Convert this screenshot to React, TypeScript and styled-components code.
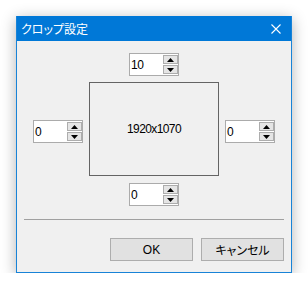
import React from "react";
import styled, { createGlobalStyle } from "styled-components";

const Global = createGlobalStyle`
  html, body { margin: 0; padding: 0; background: #ffffff; }
  body { font-family: "Liberation Sans", "Noto Sans CJK JP", sans-serif; }
`;

const Page = styled.div`
  padding: 16px 0 0 16px;
`;

const Window = styled.div`
  width: 276px;
  height: 257px;
  box-sizing: border-box;
  border: 1px solid #1883d7;
  background: #f0f0f0;
  box-shadow: 0 3px 14px rgba(0, 0, 0, 0.3);
  display: flex;
  flex-direction: column;
`;

const TitleBar = styled.div`
  height: 25px;
  margin-top: -1px;
  background: #0078d7;
  display: flex;
  align-items: center;
  justify-content: space-between;
  padding: 0 0 0 4px;
  color: #ffffff;
`;

const Title = styled.span`
  font-family: "Noto Sans CJK JP", sans-serif;
  font-size: 12px;
  font-feature-settings: "palt";
  line-height: 1;
`;

const Close = styled.div`
  width: 30px;
  height: 25px;
  display: flex;
  align-items: center;
  justify-content: center;
`;

const Body = styled.div`
  flex: 1;
  display: flex;
  flex-direction: column;
  align-items: center;
  padding-top: 12px;
`;

const Middle = styled.div`
  display: flex;
  align-items: flex-start;
  gap: 6px;
  margin: 6px 0 7px;
`;

const SideSpin = styled.div`
  margin-top: 38px;
`;

const Preview = styled.div`
  width: 130px;
  height: 94px;
  box-sizing: border-box;
  border: 1px solid #646464;
  display: flex;
  align-items: center;
  justify-content: center;
  font-size: 12px;
  letter-spacing: -0.6px;
  color: #000;
`;

const Separator = styled.div`
  align-self: stretch;
  height: 1px;
  background: #a0a0a0;
  margin: 13px 7px 0 7px;
`;

const Buttons = styled.div`
  align-self: stretch;
  display: flex;
  justify-content: flex-end;
  gap: 8px;
  padding: 18px 7px 0 0;
`;

const Button = styled.div`
  width: 83px;
  height: 23px;
  box-sizing: border-box;
  border: 1px solid #adadad;
  background: #e1e1e1;
  display: flex;
  align-items: center;
  justify-content: center;
  font-size: 12px;
  font-family: "Liberation Sans", "Noto Sans CJK JP", sans-serif;
  font-feature-settings: "palt";
  color: #000;
`;

const SpinBox = styled.div`
  width: 50px;
  height: 23px;
  box-sizing: border-box;
  border: 1px solid #ababab;
  background: #ffffff;
  display: flex;
  align-items: center;
`;

const SpinValue = styled.span`
  flex: 1;
  padding-left: 1px;
  font-size: 12px;
  letter-spacing: -0.5px;
  color: #000;
`;

const SpinButtons = styled.div`
  width: 15px;
  display: flex;
  flex-direction: column;
  gap: 1px;
`;

const SpinButton = styled.div`
  height: 9px;
  box-sizing: border-box;
  border: 1px solid #adadad;
  background: #e5e5e5;
  display: flex;
  align-items: center;
  justify-content: center;
`;

const Arrow = ({ up }: { up?: boolean }) => (
  <svg width="7" height="4" viewBox="0 0 7 4">
    <path d={up ? "M0 4 L3.5 0 L7 4 Z" : "M0 0 L3.5 4 L7 0 Z"} fill="#000" />
  </svg>
);

const Spinner = ({ value }: { value: string }) => (
  <SpinBox>
    <SpinValue>{value}</SpinValue>
    <SpinButtons>
      <SpinButton>
        <Arrow up />
      </SpinButton>
      <SpinButton>
        <Arrow />
      </SpinButton>
    </SpinButtons>
  </SpinBox>
);

export default function App() {
  return (
    <>
      <Global />
      <Page>
        <Window>
          <TitleBar>
            <Title>クロップ設定</Title>
            <Close>
              <svg width="10" height="10" viewBox="0 0 10 10">
                <path d="M0.5 0.5 L9.5 9.5 M9.5 0.5 L0.5 9.5" stroke="#fff" strokeWidth="1.1" />
              </svg>
            </Close>
          </TitleBar>
          <Body>
            <Spinner value="10" />
            <Middle>
              <SideSpin>
                <Spinner value="0" />
              </SideSpin>
              <Preview>1920x1070</Preview>
              <SideSpin>
                <Spinner value="0" />
              </SideSpin>
            </Middle>
            <Spinner value="0" />
            <Separator />
            <Buttons>
              <Button>OK</Button>
              <Button>キャンセル</Button>
            </Buttons>
          </Body>
        </Window>
      </Page>
    </>
  );
}
